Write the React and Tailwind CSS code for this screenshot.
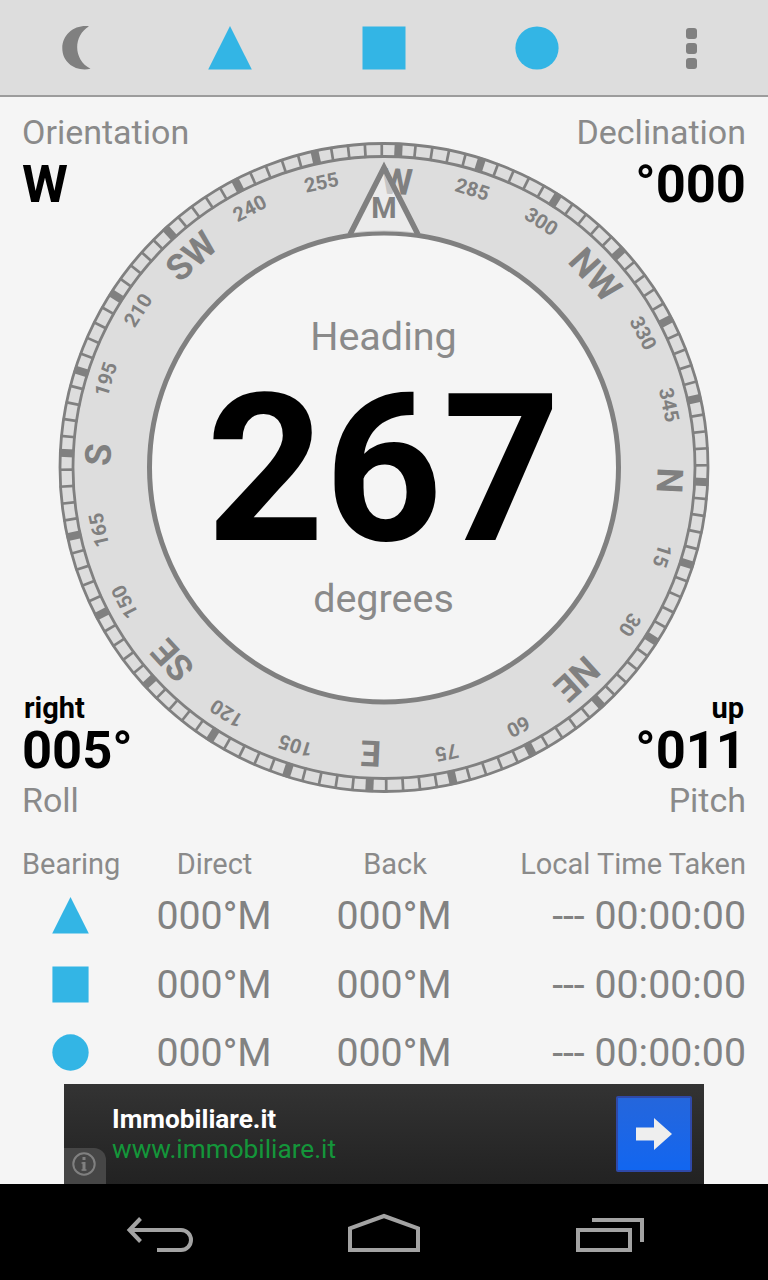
const HEADING_OFFSET = 2.6;

const DIAL_LABELS = [
  "W", "285", "300", "NW", "330", "345",
  "N", "15", "30", "NE", "60", "75",
  "E", "105", "120", "SE", "150", "165",
  "S", "195", "210", "SW", "240", "255",
];

const BEARINGS = [
  { shape: "triangle", direct: "000°M", back: "000°M", time: "--- 00:00:00" },
  { shape: "square", direct: "000°M", back: "000°M", time: "--- 00:00:00" },
  { shape: "circle", direct: "000°M", back: "000°M", time: "--- 00:00:00" },
];

const Shape = ({ type, size }) => (
  <svg width={size} height={size} viewBox="0 0 44 44" fill="#33b5e5">
    {type === "triangle" && <path d="M22 0 43.8 43.5H.2z" />}
    {type === "square" && <path d="M.5.5h43v43H.5z" />}
    {type === "circle" && <circle cx="22" cy="22" r="21.6" />}
  </svg>
);

const TopBar = () => (
  <header className="grid h-[97px] grid-cols-5 items-center justify-items-center border-b-2 border-[#9c9c9c] bg-[#dddddd]">
    <button type="button" aria-label="Night mode">
      <svg width="32" height="46" viewBox="0 0 32 46" fill="#808080">
        <path d="M28 1.3C14 -.5 1.3 9 1.3 23.3C1.3 38 15 47 29.5 43.8C12 35 12 11 28 1.3z" />
      </svg>
    </button>
    <button type="button" aria-label="Take bearing 1" className="mr-px">
      <Shape type="triangle" size={44} />
    </button>
    <button type="button" aria-label="Take bearing 2" className="mr-[0.5px]">
      <Shape type="square" size={44} />
    </button>
    <button type="button" aria-label="Take bearing 3" className="mr-[2px]">
      <Shape type="circle" size={44} />
    </button>
    <button type="button" aria-label="Menu" className="flex flex-col gap-1 pt-px">
      <span className="size-[11px] rounded-[3px] bg-[#808080]" />
      <span className="size-[11px] rounded-[3px] bg-[#808080]" />
      <span className="size-[11px] rounded-[3px] bg-[#808080]" />
    </button>
  </header>
);

const Dial = () => (
  <svg
    width="660"
    height="660"
    viewBox="-330 -330.5 660 660"
    className="mt-10 justify-self-center [grid-area:1/1]"
  >
    <circle r="324" fill="#dddddd" />
    <g stroke="#808080" fill="none">
      <circle r="324" strokeWidth="2.8" />
      <circle r="311" strokeWidth="2.8" />
      {Array.from({ length: 120 }, (_, i) => (
        <line
          key={i}
          y1="-325"
          y2="-310"
          strokeWidth={i % 5 === 0 ? 8 : 2.7}
          transform={`rotate(${HEADING_OFFSET + i * 3})`}
        />
      ))}
    </g>
    <g fill="#808080" textAnchor="middle" className="font-[Roboto] font-bold">
      {DIAL_LABELS.map((label, i) => {
        const cardinal = i % 3 === 0;
        return (
          <text
            key={label}
            y={cardinal ? -273.5 : -285}
            fontSize={cardinal ? 36 : 20}
            transform={`rotate(${HEADING_OFFSET + i * 15})`}
          >
            {label}
          </text>
        );
      })}
    </g>
    <circle r="234.5" fill="#f5f5f5" stroke="#808080" strokeWidth="5" />
    <path d="M-33 -234 0 -301 33 -234Q0 -238 -33 -234z" fill="#f5f5f5" fillOpacity=".6" />
    <path d="M-34 -233 0 -300 34 -233" fill="none" stroke="#808080" strokeWidth="5.5" />
    <text y="-249.5" fontSize="29" textAnchor="middle" fill="#808080" className="font-[Roboto] font-bold">
      M
    </text>
  </svg>
);

const Compass = () => (
  <section className="grid h-[749px] grid-cols-1 grid-rows-1">
    <Dial />

    <div className="flex flex-col items-center pt-[216px] pr-px text-[39.5px] leading-[48px] text-[#8a8a8a] [grid-area:1/1]">
      <p>Heading</p>
      <p className="mt-[12px] mb-[8px] text-[206px] leading-[194px] font-bold text-black">267</p>
      <p>degrees</p>
    </div>

    <div className="flex flex-col justify-between px-[22px] pt-[15px] pb-[26px] text-[34px] leading-10 text-[#8a8a8a] [grid-area:1/1]">
      <div className="flex justify-between">
        <div>
          <p>Orientation</p>
          <p className="pt-px text-[52.5px] leading-[62px] font-bold text-black">W</p>
        </div>
        <div className="text-right">
          <p>Declination</p>
          <p className="pt-px text-[52.5px] leading-[62px] font-bold text-black">°000</p>
        </div>
      </div>

      <div className="flex justify-between">
        <div>
          <p className="pl-[2px] text-[29px] leading-[34px] font-bold text-black">right</p>
          <p className="pb-[5px] text-[52.5px] leading-[50px] font-bold text-black">005°</p>
          <p>Roll</p>
        </div>
        <div className="text-right">
          <p className="pr-[2px] text-[29px] leading-[34px] font-bold text-black">up</p>
          <p className="pb-[5px] text-[52.5px] leading-[50px] font-bold text-black">°011</p>
          <p>Pitch</p>
        </div>
      </div>
    </div>
  </section>
);

const BearingTable = () => (
  <section className="h-[238px] px-[22px] text-[#8a8a8a]">
    <div className="mb-[6px] grid grid-cols-[98px_189px_172px_1fr] text-center text-[29px] leading-9">
      <span className="text-left">Bearing</span>
      <span>Direct</span>
      <span>Back</span>
      <span className="text-right">Local Time Taken</span>
    </div>
    <div className="flex flex-col gap-[12.5px] text-[39.3px] leading-[57px] text-[#828282]">
      {BEARINGS.map(({ shape, direct, back, time }) => (
        <div
          key={shape}
          className="grid h-[56px] grid-cols-[96px_192px_168px_1fr] items-center text-center"
        >
          <span className="flex justify-center pb-[2px]">
            <Shape type={shape} size={37} />
          </span>
          <span>{direct}</span>
          <span>{back}</span>
          <span className="text-right whitespace-pre">{time}</span>
        </div>
      ))}
    </div>
  </section>
);

const AdBanner = () => (
  <a className="mx-auto flex h-[100px] w-[640px] bg-linear-to-b from-[#333333] to-[#222222]">
    <span className="flex h-9 w-[42px] items-start self-end rounded-tr-xl bg-[#464646] pt-1 pl-2">
      <svg width="24" height="24" viewBox="0 0 24 24" fill="none" stroke="#808080" strokeWidth="3">
        <circle cx="12" cy="12" r="10.7" strokeWidth="2" />
        <path d="M12 5v3M12 10v8.5" />
        <path d="M9.5 11h2M9.5 18h5" strokeWidth="1.5" />
      </svg>
    </span>
    <span className="flex-1 pt-5 pl-1.5 text-[26.2px] leading-[30px]">
      <b className="block font-bold text-white">Immobiliare.it</b>
      <span className="block text-[#14963a]">www.immobiliare.it</span>
    </span>
    <span className="mt-3 mr-3 flex size-[76px] items-center justify-center rounded-xs border-2 border-[#2f49a8] bg-linear-to-b from-[#2466dc] to-[#1166f0]">
      <svg width="36" height="32" viewBox="0 0 36 32" fill="#eeeeee">
        <path d="M0 9.5h18V0l18 16-18 16v-9.5H0z" />
      </svg>
    </span>
  </a>
);

const NavBar = () => (
  <nav className="flex h-24 items-center bg-black">
    <svg width="768" height="96" viewBox="0 0 768 96" fill="none" stroke="#a3a3a3" strokeWidth="4">
      <path d="M130 46h51a10 10 0 0 1 0 20h-24" />
      <path d="M140.5 34.5 129.5 46l11 11.5" />
      <path d="M350 44.3 384 32l34 12.3V66h-68z" />
      <path d="M578 46h52v20h-52z" />
      <path d="M592 36h50v22" />
    </svg>
  </nav>
);

export default function App() {
  return (
    <div className="flex h-[1280px] w-[768px] flex-col overflow-hidden bg-[#f5f5f5] font-[Roboto,sans-serif]">
      <TopBar />
      <Compass />
      <BearingTable />
      <AdBanner />
      <NavBar />
    </div>
  );
}
